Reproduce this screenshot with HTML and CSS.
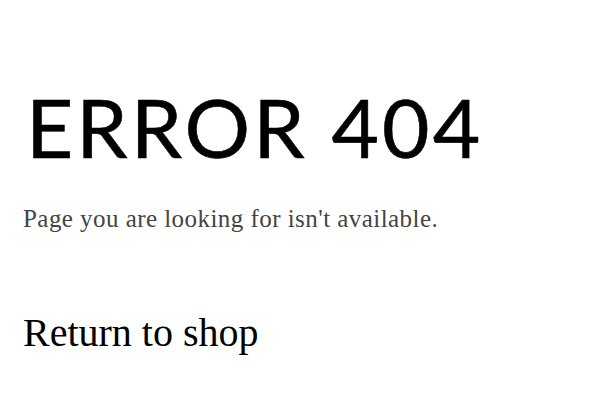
FILE: index.html
```html
<!DOCTYPE html>
<html>
<head>
<meta charset="utf-8">
<link rel="stylesheet" href="styles.css">
</head>
<body>
<main class="page">
  <h1 class="title">ERROR 404</h1>
  <p class="message">Page you are looking for isn't available.</p>
  <a class="shop-link" href="#">Return to shop</a>
</main>
</body>
</html>
```
FILE: styles.css
```css
html, body {
  margin: 0;
  padding: 0;
  background: #ffffff;
}
.page {
  padding: 76px 0 0 23px;
  display: flex;
  flex-direction: column;
  align-items: flex-start;
}
.title {
  margin: 0 0 0 3px;
  font-family: "Lato", sans-serif;
  font-weight: 400;
  font-size: 82px;
  line-height: 100px;
  letter-spacing: 3px;
  color: #000;
  -webkit-text-stroke: 0.6px #000;
}
.message {
  margin: 27px 0 0 0;
  font-family: "Liberation Serif", serif;
  font-size: 25px;
  line-height: 32px;
  letter-spacing: 0.45px;
  color: #444;
}
.shop-link {
  margin-top: 74px;
  font-family: "Liberation Serif", serif;
  font-size: 40px;
  line-height: 48px;
  color: #000;
  text-decoration: none;
}
```
